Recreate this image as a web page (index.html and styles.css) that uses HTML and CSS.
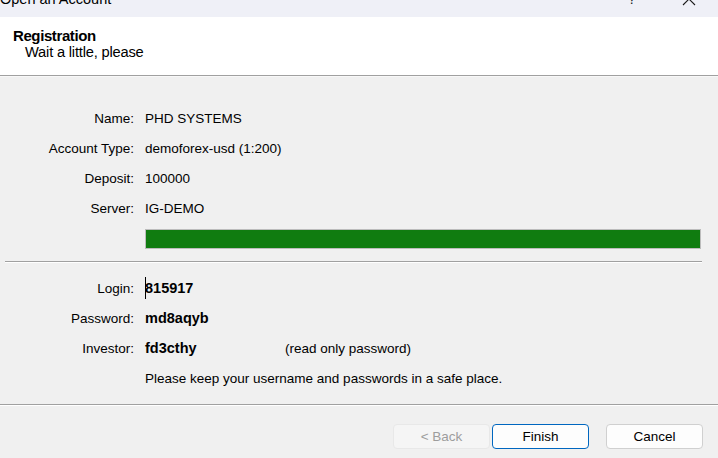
FILE: index.html
```html
<!DOCTYPE html>
<html>
<head>
<meta charset="utf-8">
<link rel="stylesheet" href="styles.css">
</head>
<body>
<div class="window">
  <div class="titlebar">
    <span class="title">Open an Account</span>
    <span class="help">?</span>
    <svg class="close" width="14" height="14" viewBox="0 0 14 14"><path d="M1 1 L13 13 M13 1 L1 13" stroke="#1a1a1a" stroke-width="1.1" fill="none"/></svg>
  </div>
  <div class="header">
    <div class="h-title">Registration</div>
    <div class="h-sub">Wait a little, please</div>
  </div>
  <div class="content">
    <div class="rows rows-top">
      <div class="label">Name:</div><div class="value">PHD SYSTEMS</div>
      <div class="label">Account Type:</div><div class="value">demoforex-usd (1:200)</div>
      <div class="label">Deposit:</div><div class="value">100000</div>
      <div class="label">Server:</div><div class="value">IG-DEMO</div>
    </div>
    <div class="progress"><div class="fill"></div></div>
    <div class="etched"></div>
    <div class="rows rows-bottom">
      <div class="label">Login:</div><div class="value strong"><span class="caret"></span>815917</div>
      <div class="label">Password:</div><div class="value strong">md8aqyb</div>
      <div class="label">Investor:</div><div class="value"><span class="strong inv">fd3cthy</span><span>(read only password)</span></div>
      <div class="label"></div><div class="value">Please keep your username and passwords in a safe place.</div>
    </div>
  </div>
  <div class="footer">
    <button class="btn disabled">&lt; Back</button>
    <button class="btn primary">Finish</button>
    <button class="btn cancel">Cancel</button>
  </div>
</div>
</body>
</html>
```
FILE: styles.css
```css
html, body {
  margin: 0;
  padding: 0;
}
body {
  width: 718px;
  height: 458px;
  overflow: hidden;
  background: #f0f0f0;
  font-family: "Liberation Sans", Arial, sans-serif;
  font-size: 13.5px;
  color: #000;
}
.window {
  display: flex;
  flex-direction: column;
  height: 458px;
}
.titlebar {
  height: 17px;
  background: #eff0f7;
  position: relative;
  overflow: hidden;
  flex: none;
}
.title {
  position: absolute;
  left: 0;
  top: -11px;
  font-family: "Liberation Sans", Arial, sans-serif;
  font-size: 14.5px;
  line-height: 20px;
  color: #000;
}
.help {
  position: absolute;
  left: 628px;
  top: -11px;
  font-size: 14px;
  line-height: 20px;
  color: #222;
}
.close {
  position: absolute;
  left: 682px;
  top: -8px;
}
.header {
  height: 59px;
  background: #fff;
  border-bottom: 1px solid #a0a0a0;
  box-sizing: border-box;
  padding: 11px 0 0 13px;
  flex: none;
}
.h-title {
  font-weight: bold;
  font-size: 15px;
  line-height: 16px;
  letter-spacing: -0.4px;
}
.h-sub {
  padding-left: 12px;
  font-size: 14.7px;
  line-height: 17px;
  letter-spacing: -0.2px;
}
.content {
  flex: 1;
  border-top: 1px solid #f8f8f8;
  border-bottom: 1px solid #a0a0a0;
  padding-top: 26px;
}
.rows {
  display: grid;
  grid-template-columns: 134px 1fr;
  column-gap: 11px;
  grid-auto-rows: 30px;
  align-items: center;
}
.label {
  text-align: right;
}
.value {
  position: relative;
  white-space: nowrap;
}
.strong {
  font-weight: bold;
  font-size: 14.5px;
}
.inv {
  display: inline-block;
  width: 140px;
}
.caret {
  position: absolute;
  left: 0;
  top: -3px;
  width: 1px;
  height: 22px;
  background: #000;
}
.progress {
  margin: 6px 17px 0 145px;
  height: 20px;
  box-sizing: border-box;
  border: 1px solid #bcbcbc;
  background: #e6e6e6;
}
.fill {
  height: 100%;
  background: #107c10;
}
.etched {
  margin: 12px 16px 0 5px;
  height: 1px;
  background: #a0a0a0;
  border-bottom: 1px solid #fff;
}
.rows-bottom {
  margin-top: 10px;
}
.footer {
  height: 53px;
  flex: none;
  border-top: 1px solid #fff;
  box-sizing: border-box;
  display: flex;
  align-items: flex-start;
  padding: 18px 0 0 393px;
}
.btn {
  width: 97px;
  height: 25px;
  box-sizing: border-box;
  border-radius: 4px;
  font-family: "Liberation Sans", Arial, sans-serif;
  font-size: 13.5px;
  background: #fdfdfd;
  border: 1px solid #d0d0d0;
  color: #000;
  padding: 0;
}
.btn.disabled {
  background: #f5f5f5;
  border-color: #e8e8e8;
  color: #9d9d9d;
}
.btn.primary {
  margin-left: 2px;
  border-color: #0067c0;
}
.btn.cancel {
  margin-left: 17px;
}
```
